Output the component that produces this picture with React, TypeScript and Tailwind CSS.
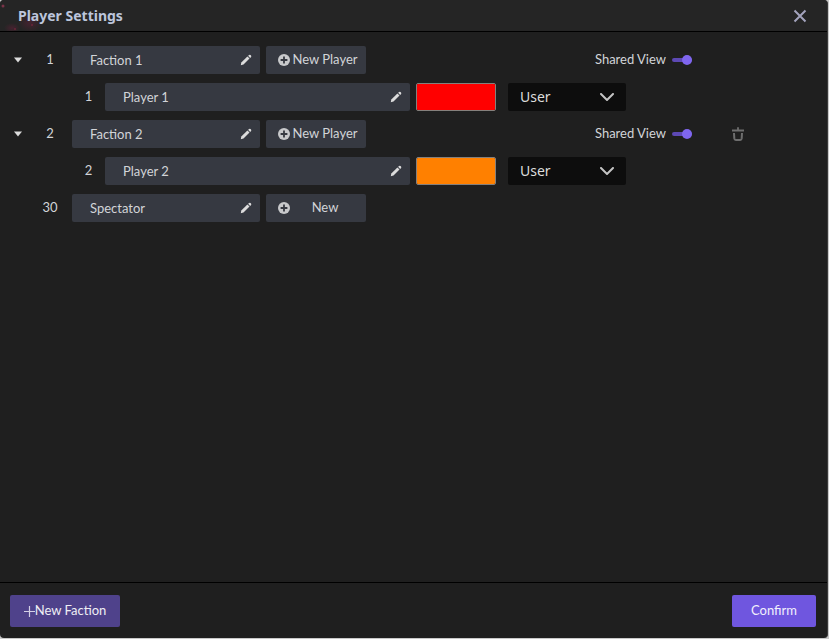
import { useState } from "react";
import clsx from "clsx";

interface Player {
  id: number;
  name: string;
  color: string;
  control: string;
}

interface Faction {
  id: number;
  name: string;
  shared: boolean;
  removable: boolean;
  players: Player[];
}

const initialFactions: Faction[] = [
  {
    id: 1,
    name: "Faction 1",
    shared: true,
    removable: false,
    players: [{ id: 1, name: "Player 1", color: "#ff0000", control: "User" }],
  },
  {
    id: 2,
    name: "Faction 2",
    shared: true,
    removable: true,
    players: [{ id: 2, name: "Player 2", color: "#ff8000", control: "User" }],
  },
];

// ─── ICONS ───────────────────────────────────────────────────────────────
function PencilIcon() {
  return (
    <svg viewBox="0 0 12 12" className="h-3 w-3" fill="currentColor" aria-hidden="true">
      <path d="M0.8 11.2 1.3 8.4 7.4 2.5 9.5 4.6 3.5 10.6Z" />
      <path d="M8.1 1.8 9.1 0.9Q9.8 0.4 10.5 1L11 1.5Q11.6 2.2 11.1 2.9L10.2 3.9Z" />
    </svg>
  );
}

function PlusCircleIcon() {
  return (
    <svg viewBox="0 0 12 12" className="h-3 w-3 shrink-0" aria-hidden="true">
      <circle cx="6" cy="6" r="6" fill="#c8c9cb" />
      <path d="M6 2.6v6.8M2.6 6h6.8" stroke="#363941" strokeWidth="1.8" />
    </svg>
  );
}

function TrashIcon() {
  return (
    <svg viewBox="0 0 12 14" className="h-3.5 w-3" fill="none" stroke="currentColor" strokeWidth="2" aria-hidden="true">
      <path d="M0 3.5h12M6 0.3v3" strokeWidth="1.8" />
      <path d="M2 6l0.3 5.4q0.2 1.6 1.5 1.6h4.4q1.3 0 1.5-1.6L10 6" />
    </svg>
  );
}

// ─── FIELDS ──────────────────────────────────────────────────────────────
function NameField({ label, value, wide }: { label: string; value: string; wide?: boolean }) {
  const [name, setName] = useState(value);
  return (
    <div className={clsx("flex h-7 items-center rounded-xs bg-[#363941] pr-2", wide ? "w-[305px]" : "w-[188px]")}>
      <input
        aria-label={label}
        value={name}
        onChange={(e) => setName(e.target.value)}
        className="h-full min-w-0 flex-1 bg-transparent pl-[18px] text-[#d2d4d8] outline-none"
      />
      <button type="button" aria-label={`Edit ${label}`} className="text-[#dcdcdc]">
        <PencilIcon />
      </button>
    </div>
  );
}

function AddButton({ label }: { label: string }) {
  return (
    <button type="button" className="ml-1.5 flex h-7 w-[100px] items-center rounded-xs bg-[#363941] pr-1.5 pl-3 text-[#d2d4d8]">
      <PlusCircleIcon />
      <span className="flex-1 text-center whitespace-nowrap">{label}</span>
    </button>
  );
}

function SharedToggle({ checked, onChange }: { checked: boolean; onChange: () => void }) {
  return (
    <label className="flex cursor-pointer items-center gap-1.5">
      Shared View
      <input type="checkbox" role="switch" checked={checked} onChange={onChange} className="peer sr-only" />
      <span
        className={clsx(
          "flex h-1 w-5 items-center rounded-full",
          checked ? "justify-end bg-[#5d49b4]" : "justify-start bg-[#555]"
        )}
      >
        <span className={clsx("h-2.5 w-2.5 rounded-full", checked ? "bg-[#7f66ee]" : "bg-[#999]")} />
      </span>
    </label>
  );
}

function PlayerRow({ player }: { player: Player }) {
  const [color, setColor] = useState(player.color);
  const [control, setControl] = useState(player.control);
  return (
    <div className="flex h-7 items-center pl-[72px]">
      <span className="w-[33px] text-center">{player.id}</span>
      <NameField label={`Player ${player.id} name`} value={player.name} wide />
      <input
        type="color"
        aria-label={`Player ${player.id} color`}
        value={color}
        onChange={(e) => setColor(e.target.value)}
        className="ml-1.5 h-7 w-20 appearance-none overflow-hidden rounded-xs border border-[#85807c] [&::-webkit-color-swatch]:border-0 [&::-webkit-color-swatch-wrapper]:p-0"
      />
      <div className="relative ml-3">
        <select
          aria-label={`Player ${player.id} control`}
          value={control}
          onChange={(e) => setControl(e.target.value)}
          className="h-7 w-[118px] appearance-none rounded-xs bg-[#0d0d0d] pr-8 pl-3 font-['Noto_Sans',sans-serif] text-sm text-[#dcdcdc]"
        >
          <option>User</option>
          <option>Computer</option>
          <option>Rescuable</option>
        </select>
        <svg viewBox="0 0 14 8" className="pointer-events-none absolute top-2.5 right-3 h-2 w-3.5" fill="none" stroke="#c4c4c4" strokeWidth="2" strokeLinecap="round" aria-hidden="true">
          <path d="M1 1l6 6 6-6" />
        </svg>
      </div>
    </div>
  );
}

export default function App() {
  const [factions, setFactions] = useState(initialFactions);
  const [closed, setClosed] = useState<number[]>([]);

  const toggleOpen = (id: number) =>
    setClosed((c) => (c.includes(id) ? c.filter((x) => x !== id) : [...c, id]));

  const toggleShared = (id: number) =>
    setFactions((list) => list.map((f) => (f.id === id ? { ...f, shared: !f.shared } : f)));

  return (
    <div className="flex min-h-screen bg-[#c9c9c9] pr-px pb-px font-[Lato,sans-serif] text-[13px] text-[#d2d4d8]">
      <div className="flex flex-1 flex-col overflow-hidden rounded-sm border-r border-[#3a3a3a] bg-[#1f1f1f]">
        {/* Header */}
        <header className="relative flex h-8 items-center justify-between border-b border-black bg-[#252525] pr-5 pl-[18px]">
          <svg viewBox="0 0 180 31" className="absolute top-0 left-0 h-[31px] w-[180px]" aria-hidden="true">
            <defs>
              <radialGradient id="glow">
                <stop offset="0" stopColor="#5a2036" stopOpacity="0.6" />
                <stop offset="1" stopColor="#5a2036" stopOpacity="0" />
              </radialGradient>
            </defs>
            <ellipse cx="30" cy="23" rx="12" ry="9" fill="url(#glow)" />
            <ellipse cx="12" cy="28" rx="8" ry="5" fill="url(#glow)" />
            <circle cx="3" cy="6" r="1.5" fill="#7a3348" />
            <circle cx="32" cy="25" r="1" fill="#6b2438" />
            <circle cx="15" cy="29" r="1" fill="#6b2438" />
          </svg>
          <h1 className="relative font-['Noto_Sans',sans-serif] text-sm font-bold text-[#bcc5dc]">Player Settings</h1>
          <button type="button" aria-label="Close" className="text-[#a3a3bd]">
            <svg viewBox="0 0 14 14" className="h-3.5 w-3.5" fill="none" stroke="currentColor" strokeWidth="2" aria-hidden="true">
              <path d="M1.5 1.5l11 11M12.5 1.5l-11 11" />
            </svg>
          </button>
        </header>

        {/* Faction list */}
        <main className="flex flex-1 flex-col gap-[9px] pt-3.5">
          {factions.map((f) => (
            <section key={f.id} className="flex flex-col gap-[9px]">
              <div className="flex h-7 items-center">
                <button
                  type="button"
                  aria-label={`Toggle ${f.name}`}
                  aria-expanded={!closed.includes(f.id)}
                  onClick={() => toggleOpen(f.id)}
                  className="flex w-9 justify-center"
                >
                  <svg viewBox="0 0 8 6" className="h-1.5 w-2" fill="#dcdcdc" aria-hidden="true">
                    <path d="M0 0.5h8L4 5.5Z" />
                  </svg>
                </button>
                <span className="mr-2 w-7 text-center">{f.id}</span>
                <NameField label={`Faction ${f.id} name`} value={f.name} />
                <AddButton label="New Player" />
                <div className="ml-auto flex items-center">
                  <SharedToggle checked={f.shared} onChange={() => toggleShared(f.id)} />
                  <div className="ml-10 flex w-[95px] text-[#6e6e6e]">
                    {f.removable && (
                      <button
                        type="button"
                        aria-label={`Delete ${f.name}`}
                        onClick={() => setFactions((list) => list.filter((x) => x.id !== f.id))}
                      >
                        <TrashIcon />
                      </button>
                    )}
                  </div>
                </div>
              </div>
              {!closed.includes(f.id) && f.players.map((p) => <PlayerRow key={p.id} player={p} />)}
            </section>
          ))}
          <div className="flex h-7 items-center pl-9">
            <span className="mr-2 w-7 text-center">30</span>
            <NameField label="Spectator name" value="Spectator" />
            <AddButton label="New" />
          </div>
        </main>

        {/* Footer */}
        <footer className="flex items-center justify-between border-t border-black pt-3 pr-[11px] pb-[11px] pl-2.5">
          <button type="button" className="flex h-8 w-[110px] items-center justify-center rounded-xs bg-[#4f428b] text-[#eeeef4]">
            <svg viewBox="0 0 11 11" className="h-[11px] w-[11px]" stroke="#d4d0e6" strokeWidth="1.2" aria-hidden="true">
              <path d="M5.5 0v11M0 5.5h11" />
            </svg>
            New Faction
          </button>
          <button type="button" className="h-8 w-[84px] rounded-xs bg-[#6f56df] text-[#f2f0fc]">
            Confirm
          </button>
        </footer>
      </div>
    </div>
  );
}
